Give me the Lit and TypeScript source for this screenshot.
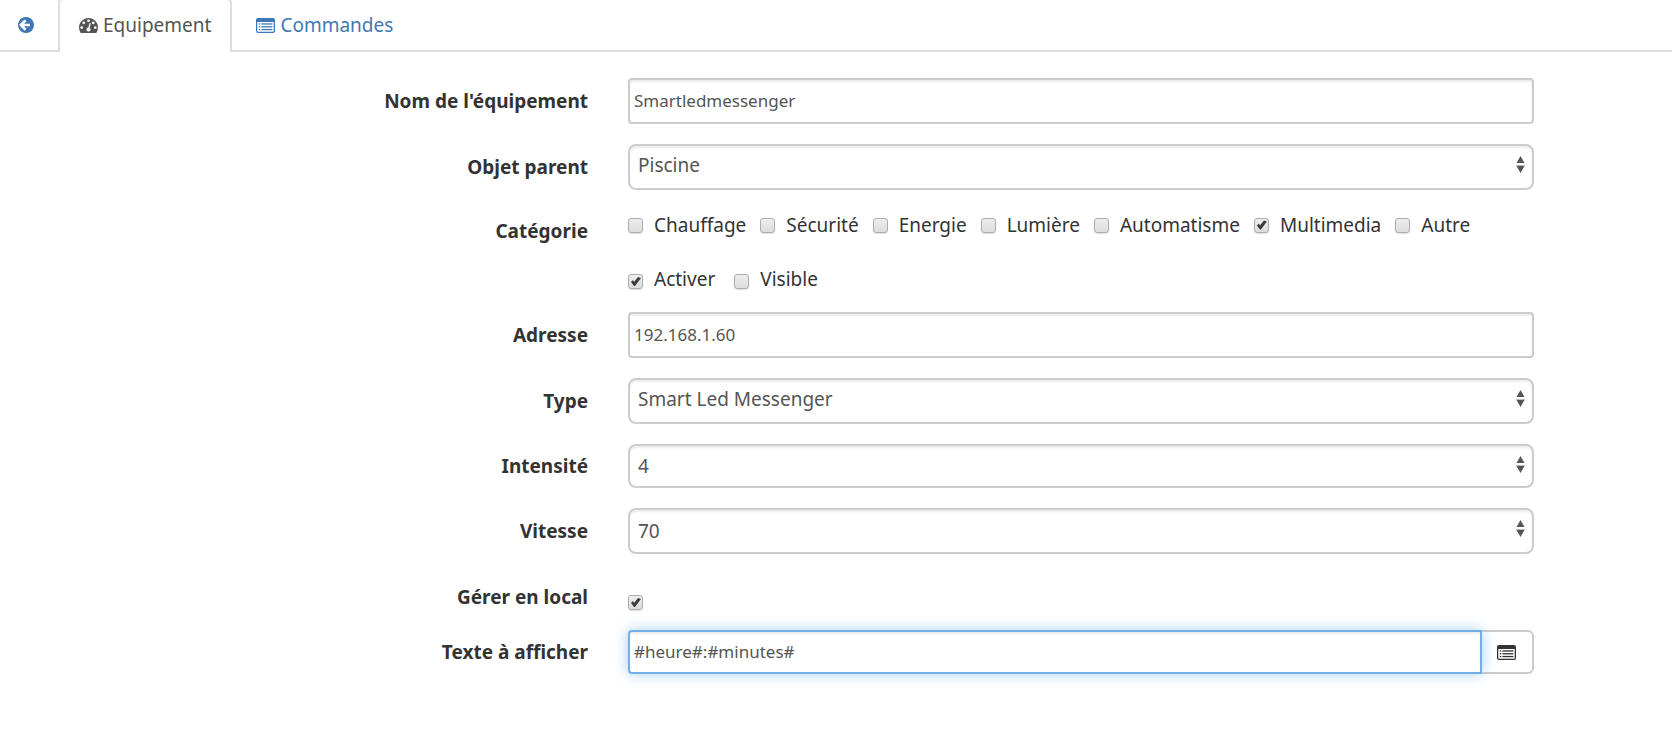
import { LitElement, html, css, svg } from "lit";
import { customElement, state } from "lit/decorators.js";

const backIcon = html`<svg class="icon-back" viewBox="128 128 1536 1536" aria-hidden="true">
  <path d="M1280 960v-128q0-26-19-45t-45-19h-502l189-189q19-19 19-45t-19-45l-91-91q-18-18-45-18t-45 18l-362 362-91 91q-18 18-18 45t18 45l91 91 362 362q18 18 45 18t45-18l91-91q18-18 18-45t-18-45l-189-189h502q26 0 45-19t19-45zm384-64q0 209-103 385.5t-279.5 279.5-385.5 103-385.5-103-279.5-279.5-103-385.5 103-385.5 279.5-279.5 385.5-103 385.5 103 279.5 279.5 103 385.5z" />
</svg>`;

const gaugeIcon = html`<svg class="icon-gauge" viewBox="0 256 1792 1408" aria-hidden="true">
  <path d="M384 1152q0-53-37.5-90.5t-90.5-37.5-90.5 37.5-37.5 90.5 37.5 90.5 90.5 37.5 90.5-37.5 37.5-90.5zm192-448q0-53-37.5-90.5t-90.5-37.5-90.5 37.5-37.5 90.5 37.5 90.5 90.5 37.5 90.5-37.5 37.5-90.5zm428 481l101-382q6-26-7.5-48.5t-38.5-29.5-48 6.5-30 39.5l-101 382q-60 5-107 43.5t-63 98.5q-20 77 20 146t117 89 146-20 89-117q16-60-6-117t-72-91zm660-33q0-53-37.5-90.5t-90.5-37.5-90.5 37.5-37.5 90.5 37.5 90.5 90.5 37.5 90.5-37.5 37.5-90.5zm-640-640q0-53-37.5-90.5t-90.5-37.5-90.5 37.5-37.5 90.5 37.5 90.5 90.5 37.5 90.5-37.5 37.5-90.5zm448 192q0-53-37.5-90.5t-90.5-37.5-90.5 37.5-37.5 90.5 37.5 90.5 90.5 37.5 90.5-37.5 37.5-90.5zm320 448q0 261-141 483-19 29-54 29h-1402q-35 0-54-29-141-221-141-483 0-182 71-348t191-286 286-191 348-71 348 71 286 191 191 286 71 348z" />
</svg>`;

const listIcon = html`<svg class="icon-list" viewBox="0 0 19 15" aria-hidden="true">
  <path fill-rule="evenodd" d="M2 0H17Q19 0 19 2V13Q19 15 17 15H2Q0 15 0 13V2Q0 0 2 0ZM1.3 4V13Q1.3 13.8 2 13.8H17Q17.7 13.8 17.7 13V4Z" />
  ${[5.3, 8.1, 10.9].map(
    (y) => svg`<rect x="2.8" y=${y} width="1.5" height="1.3" /><rect x="5.4" y=${y} width="11" height="1.3" />`
  )}
</svg>`;

interface Option {
  id: string;
  label: string;
  checked: boolean;
}

@customElement("app-root")
export class AppRoot extends LitElement {
  static styles = css`
    :host {
      display: block;
      background: #fff;
      color: #333;
      font: 19px/26px "Noto Sans", sans-serif;
    }
    * {
      box-sizing: border-box;
    }
    svg {
      fill: currentColor;
      flex: none;
      display: block;
    }
    .icon-back {
      width: 16px;
      height: 16px;
    }
    .icon-gauge,
    .icon-list {
      width: 19px;
      height: 15px;
    }
    .tabs {
      display: flex;
      height: 52px;
      border-bottom: 2px solid #ddd;
    }
    .tab {
      display: flex;
      align-items: center;
      gap: 5px;
      height: 50px;
      padding: 0 24px;
      color: #3f78b6;
      text-decoration: none;
    }
    .tab.back {
      padding: 0 22px 0 18px;
      margin-right: 2px;
    }
    .tab.active {
      height: 54px;
      margin-top: -2px;
      padding: 0 19px 2px;
      color: #555;
      background: #fff;
      border: 2px solid #ddd;
      border-bottom: 0;
      border-radius: 5px 5px 0 0;
    }
    .form {
      display: flex;
      flex-direction: column;
      gap: 20px;
      padding: 26px 0;
    }
    .row {
      display: grid;
      grid-template-columns: 608fr 946fr 118fr;
      align-items: center;
    }
    .name {
      padding-right: 20px;
      text-align: right;
      font-weight: 700;
    }
    .field {
      grid-column: 2;
      padding: 0 20px;
      min-width: 0;
    }
    .row.categories {
      align-items: start;
    }
    .categories .name {
      padding-top: 8px;
    }
    .categories .field,
    .states .field {
      padding-top: 2px;
    }
    .row.local {
      padding-top: 10px;
      align-items: end;
    }
    .control {
      display: block;
      width: 100%;
      height: 46px;
      margin: 0;
      color: #555;
      background: #fff;
      border: 2px solid #ccc;
      border-radius: 4px;
      box-shadow: inset 0 2px 2px rgba(0, 0, 0, 0.075);
      font-family: inherit;
      outline: 0;
    }
    input.control {
      padding: 0 4px 1px;
      font-size: 17px;
    }
    select.control {
      appearance: none;
      padding: 0 40px 4px 8px;
      border-radius: 8px;
      font-size: 19px;
    }
    select.control.numeric {
      padding-bottom: 1px;
    }
    .control.short {
      height: 44px;
    }
    .select {
      position: relative;
    }
    .arrows {
      position: absolute;
      right: 9px;
      top: 12px;
      width: 9px;
      height: 17px;
      color: #555;
      pointer-events: none;
    }
    .checks {
      display: flex;
      flex-wrap: wrap;
      column-gap: 14px;
    }
    .states .checks {
      column-gap: 19px;
    }
    .check {
      display: flex;
      align-items: center;
      gap: 11px;
    }
    .states .check {
      align-items: end;
    }
    .states .box {
      margin-bottom: 3px;
    }
    .box {
      appearance: none;
      display: block;
      flex: none;
      width: 15px;
      height: 15px;
      margin: 0;
      border: 1px solid #acacac;
      border-radius: 3px;
      background: linear-gradient(#ededed, #dcdcdc);
      box-shadow: 0 1px 1px rgba(0, 0, 0, 0.12);
    }
    .box:checked::before {
      content: "";
      display: block;
      width: 13px;
      height: 13px;
      background: #3c3c3c;
      clip-path: polygon(2px 7px, 4px 5px, 5px 7px, 9px 2px, 12px 3px, 6px 11px, 5px 11px);
    }
    .group {
      display: flex;
    }
    .group .control {
      position: relative;
      z-index: 1;
      flex: 1;
      min-width: 0;
      border-color: #73aee6;
      border-radius: 4px 0 0 4px;
      box-shadow: inset 0 2px 2px rgba(0, 0, 0, 0.075), 0 0 14px rgba(102, 175, 233, 0.6);
    }
    .pick {
      display: grid;
      place-items: center;
      width: 52px;
      height: 44px;
      padding: 0 2px 0 0;
      color: #333;
      background: #fff;
      border: 2px solid #ccc;
      border-left: 0;
      border-radius: 0 6px 6px 0;
    }
  `;

  @state() private categories: Option[] = [
    { id: "heating", label: "Chauffage", checked: false },
    { id: "security", label: "Sécurité", checked: false },
    { id: "energy", label: "Energie", checked: false },
    { id: "light", label: "Lumière", checked: false },
    { id: "automatism", label: "Automatisme", checked: false },
    { id: "multimedia", label: "Multimedia", checked: true },
    { id: "other", label: "Autre", checked: false },
  ];

  @state() private states: Option[] = [
    { id: "enabled", label: "Activer", checked: true },
    { id: "visible", label: "Visible", checked: false },
  ];

  private textRow(id: string, label: string, value: string) {
    return html`<div class="row">
      <label class="name" for=${id}>${label}</label>
      <div class="field"><input class="control" id=${id} type="text" .value=${value} /></div>
    </div>`;
  }

  private selectRow(id: string, label: string, value: string, variant = "") {
    return html`<div class="row">
      <label class="name" for=${id}>${label}</label>
      <div class="field">
        <div class="select">
          <select class="control ${variant}" id=${id}>
            <option>${value}</option>
          </select>
          <svg class="arrows" viewBox="0 0 9 17" aria-hidden="true">
            <path d="M4.5 0L8.5 7H.5ZM.5 10H8.5L4.5 17Z" />
            <path opacity=".4" d="M0 9H9V10H0Z" />
          </svg>
        </div>
      </div>
    </div>`;
  }

  private checks(options: Option[]) {
    return html`<div class="checks">
      ${options.map(
        (o) => html`<label class="check">
          <input class="box" type="checkbox" id=${o.id} .checked=${o.checked} />${o.label}
        </label>`
      )}
    </div>`;
  }

  render() {
    return html`
      <nav class="tabs">
        <a class="tab back" href="#back" aria-label="Retour">${backIcon}</a>
        <a class="tab active" href="#equipement">${gaugeIcon}Equipement</a>
        <a class="tab" href="#commandes">${listIcon}Commandes</a>
      </nav>
      <form class="form">
        ${this.textRow("name", "Nom de l'équipement", "Smartledmessenger")}
        ${this.selectRow("parent", "Objet parent", "Piscine")}
        <div class="row categories" role="group" aria-labelledby="categories">
          <span class="name" id="categories">Catégorie</span>
          <div class="field">${this.checks(this.categories)}</div>
        </div>
        <div class="row states">
          <div class="field">${this.checks(this.states)}</div>
        </div>
        ${this.textRow("address", "Adresse", "192.168.1.60")}
        ${this.selectRow("type", "Type", "Smart Led Messenger")}
        ${this.selectRow("intensity", "Intensité", "4", "numeric short")}
        ${this.selectRow("speed", "Vitesse", "70", "numeric")}
        <div class="row local">
          <label class="name" for="local">Gérer en local</label>
          <div class="field"><input class="box" type="checkbox" id="local" .checked=${true} /></div>
        </div>
        <div class="row">
          <label class="name" for="text">Texte à afficher</label>
          <div class="field group">
            <input class="control short" id="text" type="text" .value=${"#heure#:#minutes#"} />
            <button class="pick" type="button" aria-label="Choisir une commande">${listIcon}</button>
          </div>
        </div>
      </form>
    `;
  }
}
